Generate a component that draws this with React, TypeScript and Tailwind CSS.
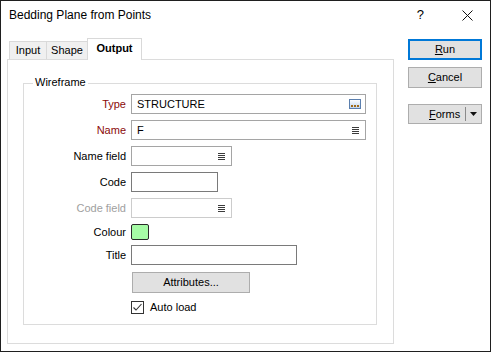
import React from "react";

const font = { fontFamily: '"Liberation Sans", Arial, sans-serif' };

function Lines() {
  return (
    <svg width="7" height="7" viewBox="0 0 7 7" className="block">
      <path d="M0 0.5h7M0 2.5h7M0 4.5h7M0 6.5h7" stroke="#3c3c3c" strokeWidth="1" />
    </svg>
  );
}

function Ellipsis() {
  return (
    <svg width="12" height="10" viewBox="0 0 12 10" className="block">
      <defs>
        <linearGradient id="eg" x1="0" y1="0" x2="0" y2="1">
          <stop offset="0" stopColor="#ffffff" />
          <stop offset="1" stopColor="#bcd3ee" />
        </linearGradient>
      </defs>
      <rect x="0.5" y="0.5" width="11" height="9" fill="url(#eg)" stroke="#5b7fae" />
      <rect x="2" y="6" width="2" height="2" fill="#a06a1a" />
      <rect x="5" y="6" width="2" height="2" fill="#a06a1a" />
      <rect x="8" y="6" width="2" height="2" fill="#a06a1a" />
    </svg>
  );
}

function Row({
  label,
  tone = "text-black",
  children,
  className = "",
}: {
  label: string;
  tone?: string;
  children: React.ReactNode;
  className?: string;
}) {
  return (
    <div className={`flex items-center ${className}`}>
      <div className={`w-[102px] text-right leading-none ${tone}`}>{label}</div>
      <div className="ml-[5px] flex items-center">{children}</div>
    </div>
  );
}

export default function App() {
  return (
    <div
      style={font}
      className="w-[491px] h-[352px] border border-[#1f1f1f] bg-white text-[11px] text-black flex flex-col overflow-hidden"
    >
      {/* title bar */}
      <div className="h-[37px] flex items-start">
        <div className="h-[28px] flex items-center pl-[8px] text-[12px]">Bedding Plane from Points</div>
        <div className="ml-auto h-[28px] flex items-center">
          <span className="text-[13px] mr-[38px]">?</span>
          <svg width="11" height="11" viewBox="0 0 11 11" className="mr-[17px]">
            <path d="M0.5 0.5l10 10M10.5 0.5l-10 10" stroke="#111" strokeWidth="1" />
          </svg>
        </div>
      </div>

      <div className="flex">
        {/* left: tabs + panel */}
        <div className="ml-[6px] flex flex-col">
          <div className="relative z-10 flex items-end h-[21px] pl-[2px]">
            <div className="w-[37px] h-[18px] border-t border-l border-[#d9d9d9] bg-[#f0f0f0] flex items-center justify-center">
              Input
            </div>
            <div className="w-[41px] h-[18px] border-t border-l border-[#d9d9d9] bg-[#f0f0f0] flex items-center justify-center">
              Shape
            </div>
            <div className="w-[55px] h-[22px] -mb-px border-t border-l border-r border-[#d9d9d9] bg-white flex items-center justify-center font-bold pb-[2px]">
              Output
            </div>
          </div>
          <div className="w-[387px] h-[285px] border border-[#dcdcdc] bg-white">
            <div className="relative ml-[15px] mt-[23px] w-[354px] h-[242px] border border-[#dcdcdc] pt-[10px]">
              <span className="absolute -top-[7px] left-[9px] bg-white px-[2px] leading-none">Wireframe</span>

              <Row label="Type" tone="text-[#8b0a0a]">
                <div className="w-[235px] h-[20px] border border-[#a5a5a5] flex items-center pl-[5px] pr-[4px]">
                  <span className="leading-none">STRUCTURE</span>
                  <span className="ml-auto">
                    <Ellipsis />
                  </span>
                </div>
              </Row>
              <Row label="Name" tone="text-[#8b0a0a]" className="mt-[6px]">
                <div className="w-[235px] h-[20px] border border-[#a5a5a5] flex items-center pl-[5px] pr-[6px]">
                  <span className="leading-none">F</span>
                  <span className="ml-auto">
                    <Lines />
                  </span>
                </div>
              </Row>
              <Row label="Name field" className="mt-[6px]">
                <div className="w-[101px] h-[20px] border border-[#a5a5a5] flex items-center justify-end pr-[6px]">
                  <Lines />
                </div>
              </Row>
              <Row label="Code" className="mt-[6px]">
                <div className="w-[87px] h-[20px] border border-[#7a7a7a]" />
              </Row>
              <Row label="Code field" tone="text-[#a0a0a0]" className="mt-[6px]">
                <div className="w-[101px] h-[20px] border border-[#cccccc] flex items-center justify-end pr-[6px]">
                  <Lines />
                </div>
              </Row>
              <Row label="Colour" className="mt-[6px]">
                <div className="w-[18px] h-[16px] rounded-[2px] border border-[#2a2a2a] bg-[#a6fca6]" />
              </Row>
              <Row label="Title" className="mt-[5px]">
                <div className="w-[166px] h-[20px] border border-[#7a7a7a]" />
              </Row>
              <Row label="" className="mt-[7px]">
                <div className="ml-px w-[118px] h-[21px] border border-[#adadad] bg-[#e1e1e1] flex items-center justify-center">
                  Attributes...
                </div>
              </Row>
              <Row label="" className="mt-[8px]">
                <div className="w-[13px] h-[13px] border border-[#333] bg-white flex items-center justify-center">
                  <svg width="11" height="11" viewBox="0 0 11 11">
                    <path d="M1.5 5.5l2.5 2.5 5.5-6" fill="none" stroke="#333" strokeWidth="1.1" />
                  </svg>
                </div>
                <span className="ml-[6px] leading-none">Auto load</span>
              </Row>
            </div>
          </div>
        </div>

        {/* right: buttons */}
        <div className="ml-[14px] mt-[1px] flex flex-col">
          <div className="w-[74px] h-[21px] border-2 border-[#0078d7] bg-[#e1e1e1] flex items-center justify-center">
            <span>
              <span className="underline">R</span>un
            </span>
          </div>
          <div className="mt-[7px] w-[74px] h-[21px] border border-[#adadad] bg-[#e1e1e1] flex items-center justify-center">
            <span>
              <span className="underline">C</span>ancel
            </span>
          </div>
          <div className="mt-[16px] w-[74px] h-[20px] border border-[#adadad] bg-[#e1e1e1] flex items-center">
            <span className="ml-[20px]">
              <span className="underline">F</span>orms
            </span>
            <span className="ml-auto h-[14px] w-px bg-[#8a8a8a]" />
            <svg width="7" height="4" viewBox="0 0 7 4" className="ml-[4px] mr-[4px]">
              <path d="M0 0h7L3.5 4z" fill="#111" />
            </svg>
          </div>
        </div>
      </div>
    </div>
  );
}
